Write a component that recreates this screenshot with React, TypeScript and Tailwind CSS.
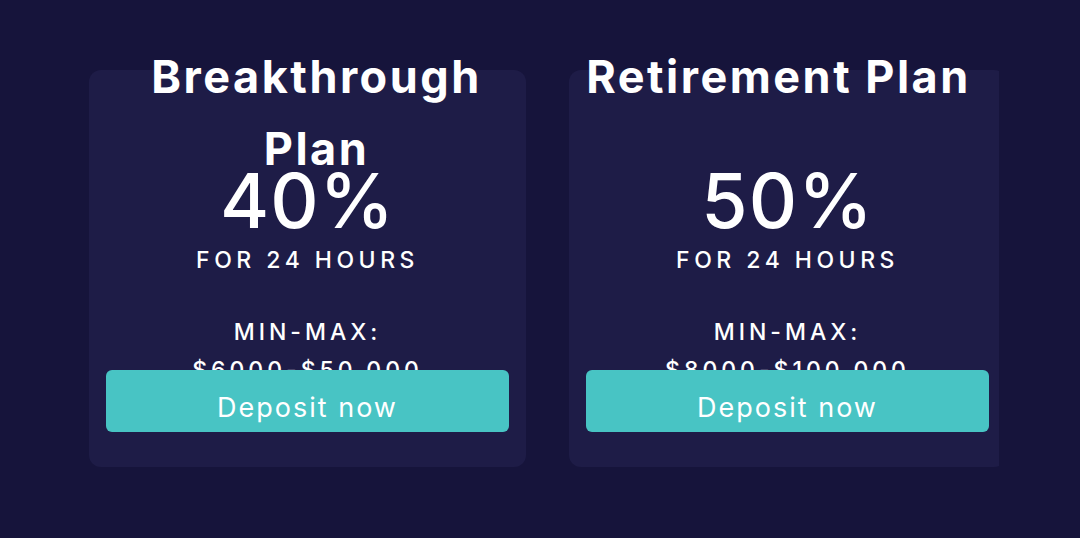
import React from 'react';

interface Plan {
  title: string;
  rate: string;
  range: string;
  shift: string;
}

// 投资计划卡片数据
const plans: Plan[] = [
  { title: 'Breakthrough Plan', rate: '40%', range: '$6000-$50,000', shift: 'translate-x-[9px]' },
  { title: 'Retirement Plan', rate: '50%', range: '$8000-$100,000', shift: '-translate-x-[9px]' },
];

const font = { fontFamily: 'Inter, "Open Sans", sans-serif' };

const PlanCard: React.FC<{ plan: Plan }> = ({ plan }) => (
  <div className="shrink-0 w-[437px] h-[397px] rounded-xl bg-[#1e1c47] flex flex-col items-center px-[17px] text-white">
    {/* 标题 */}
    <div
      className={`-mt-[29px] h-[122px] w-[403px] text-center text-[45px] leading-[72px] font-bold tracking-[2.5px] ${plan.shift}`}
    >
      {plan.title}
    </div>
    {/* 收益率 */}
    <div className="text-[75px] leading-[75px] font-medium tracking-[1px]">{plan.rate}</div>
    <div className="mt-[6px] text-[23px] leading-[33px] font-medium tracking-[4.5px]">FOR 24 HOURS</div>
    {/* 限额 */}
    <div className="mt-[36px] h-[57px] text-center text-[23px] leading-[38px] font-medium tracking-[4px]">
      <div>MIN-MAX:</div>
      <div>{plan.range}</div>
    </div>
    <button className="relative w-[403px] h-[62px] pt-[14px] rounded-md bg-[#48c4c4] text-[27px] leading-[32px] font-normal tracking-[2px] text-white">
      Deposit now
    </button>
  </div>
);

export default function App() {
  return (
    <div className="w-[1080px] h-[538px] bg-[#16143b] overflow-hidden" style={font}>
      <div className="ml-[89px] w-[910px] overflow-hidden pt-[70px] flex gap-[43px]">
        {plans.map((p) => (
          <PlanCard key={p.title} plan={p} />
        ))}
      </div>
    </div>
  );
}
